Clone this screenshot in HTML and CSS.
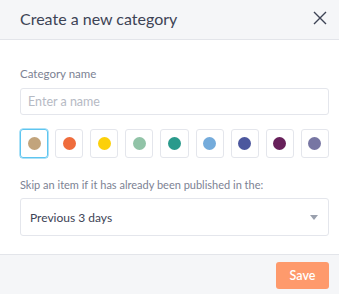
FILE: index.html
```html
<!DOCTYPE html>
<html lang="en">
<head>
	<meta charset="UTF-8">
	<title>Create a new category</title>
	<link rel="stylesheet" href="styles.css">
</head>
<body>
	<div class="modal">
		<!--头部-->
		<div class="head">
			<span class="title">Create a new category</span>
			<svg class="close" width="14" height="14" viewBox="0 0 14 14"><path d="M1 1L13 13M13 1L1 13" stroke="#3d4355" stroke-width="1.4" fill="none"/></svg>
		</div>
		<!--内容-->
		<div class="body">
			<div class="label">Category name</div>
			<div class="input">Enter a name</div>
			<ul class="colors">
				<li class="current"><i style="background:#c2a47c"></i></li>
				<li><i style="background:#ef6c3c"></i></li>
				<li><i style="background:#fcd00a"></i></li>
				<li><i style="background:#91c3a7"></i></li>
				<li><i style="background:#2a9a8c"></i></li>
				<li><i style="background:#74abdb"></i></li>
				<li><i style="background:#4c579e"></i></li>
				<li><i style="background:#67205a"></i></li>
				<li><i style="background:#7776a3"></i></li>
			</ul>
			<div class="label skip">Skip an item if it has already been published in the:</div>
			<div class="select">
				<span>Previous 3 days</span>
				<svg width="8" height="5" viewBox="0 0 8 5"><path d="M0 0H8L4 5Z" fill="#9aa0ad"/></svg>
			</div>
		</div>
		<!--底部-->
		<div class="foot">
			<span class="save">Save</span>
		</div>
	</div>
</body>
</html>
```

FILE: styles.css
```css
*{
	margin:0px;
	padding:0px;
	box-sizing: border-box;
}
ul li{
	list-style: none
}
body{
	font-family: Lato, "Noto Sans", sans-serif;
	background: #fff;
	width: 339px;
	height: 294px;
}
.modal{
	display: flex;
	flex-direction: column;
	height: 294px;
}
.head{
	height: 40px;
	background: #f5f6f8;
	border-bottom: 1px solid #e3e5ea;
	display: flex;
	align-items: center;
	justify-content: space-between;
	padding: 0 12px 0 20px;
}
.title{
	font-size: 16px;
	color: #3d4355;
	margin-top: -3px;
}
.close{
	margin-top: -3px;
}
.body{
	flex: 1;
	padding: 26px 10px 0 20px;
}
.label{
	font-size: 11.5px;
	color: #7c8293;
	line-height: 16px;
	margin-bottom: 6px;
}
.input{
	height: 27px;
	border: 1px solid #e4e6ec;
	border-radius: 3px;
	font-size: 12.5px;
	color: #b6bac4;
	padding: 0 7px;
	line-height: 25px;
}
.colors{
	display: flex;
	gap: 7px;
	margin-top: 14px;
}
.colors li{
	width: 28.6px;
	height: 29px;
	border: 1px solid #e4e6ec;
	border-radius: 3px;
	display: flex;
	align-items: center;
	justify-content: center;
}
.colors li.current{
	border: 1px solid #5ec5f0;
	box-shadow: 0 0 0 0.5px #5ec5f0;
}
.colors i{
	width: 13px;
	height: 13px;
	border-radius: 50%;
}
.skip{
	font-size: 11px;
	margin-top: 19px;
	margin-bottom: 5px;
}
.select{
	height: 38px;
	border: 1px solid #e4e6ec;
	border-radius: 3px;
	display: flex;
	align-items: center;
	justify-content: space-between;
	padding: 0 10px 0 9px;
	font-size: 12px;
	color: #3d4355;
}
.foot{
	height: 40px;
	background: #f5f6f8;
	border-top: 1px solid #e3e5ea;
	display: flex;
	align-items: center;
	justify-content: flex-end;
	padding: 0 10px 0 0;
}
.save{
	width: 53px;
	height: 27px;
	background: #fe9a6c;
	border-radius: 3px;
	color: #fff;
	font-size: 12.5px;
	font-weight: 600;
	display: flex;
	align-items: center;
	justify-content: center;
	margin-top: 2px;
}
```
